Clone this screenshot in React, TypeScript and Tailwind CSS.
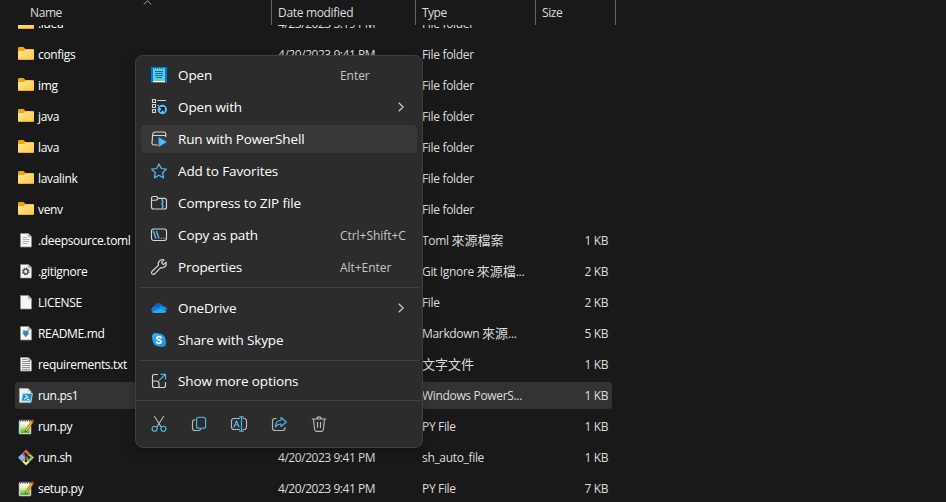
import type { ReactNode } from "react";

const svg = "block size-4 shrink-0 overflow-visible";

function FolderIcon() {
  return (
    <svg viewBox="0 0 16 16" className={svg}>
      <defs>
        <linearGradient id="fold" x1="0" y1="0" x2="1" y2="1">
          <stop offset="0" stopColor="#ffe69a" />
          <stop offset="1" stopColor="#fdc93f" />
        </linearGradient>
      </defs>
      <path d="M0 1.3Q0 0 1.3 0H5.5L7.5 2H14.8Q16 2 16 3.2V8H0Z" fill="#f3a60c" />
      <path d="M0 5Q0 4 1 4H6L7.5 2.6H15Q16 2.6 16 3.6V11.8Q16 13 14.8 13H1.2Q0 13 0 11.8Z" fill="url(#fold)" />
      <path d="M0 11.6Q0 13 1.2 13H14.8Q16 13 16 11.6Q15.6 12.2 14.8 12.2H1.2Q.4 12.2 0 11.6Z" fill="#e3a21a" />
    </svg>
  );
}

function Page({ children }: { children?: ReactNode }) {
  return (
    <svg viewBox="0 0 16 16" className={svg}>
      <path d="M2.5 .5H10.5L13.5 3.5V14H2.5Z" fill="#f6f6f6" stroke="#8f8f8b" strokeWidth=".8" />
      <path d="M10.3 .5V3.7H13.5Z" fill="#b9b9b9" stroke="#8f8f8b" strokeWidth=".5" />
      {children}
    </svg>
  );
}

function TomlIcon() {
  return (
    <Page>
      <path d="M4.5 4.5H9M4.5 6.5H11.5M4.5 8.5H11.5M4.5 10.5H9.5" stroke="#b4b4b4" strokeWidth="1" />
    </Page>
  );
}
function GitignoreIcon() {
  return (
    <Page>
      <circle cx="7.7" cy="7.5" r="3.2" fill="none" stroke="#4d5c62" strokeWidth="1.4" strokeDasharray="1.5 1.01" />
      <circle cx="7.7" cy="7.5" r="2.2" fill="none" stroke="#4d5c62" strokeWidth="1.4" />
    </Page>
  );
}
function MarkdownIcon() {
  return (
    <Page>
      <path d="M5.2 4 7.8 4.9 10.4 4V7H11.3L7.8 11.2 4.3 7H5.2Z" fill="#3f87ae" />
    </Page>
  );
}
function TextIcon() {
  return (
    <Page>
      <path d="M4 2.5H9M4 4.5H12M4 6.5H12M4 8.5H12M4 10.5H12M4 12.3H12" stroke="#858585" strokeWidth=".9" />
    </Page>
  );
}
function Ps1Icon() {
  return (
    <svg viewBox="0 0 16 16" className={svg}>
      <path d="M1.5 .5H10L13 3.5V14.6H1.5Z" fill="#eef1f3" stroke="#a5adb3" strokeWidth=".8" />
      <path d="M10 .5V3.5H13Z" fill="#bfc7cc" />
      <path d="M4.8 5.4H14.4L13.2 13H3.4Z" fill="#2a8fc4" stroke="#a9dcf3" strokeWidth=".9" />
      <path d="M7 6.8 9.6 9 6 11.3M9 11.4H11.4" stroke="#d6effa" strokeWidth="1.1" fill="none" />
    </svg>
  );
}
function PyIcon() {
  return (
    <svg viewBox="0 0 16 16" className={svg}>
      <defs>
        <linearGradient id="npp" x1="0" y1="0" x2="0" y2="1">
          <stop offset=".2" stopColor="#e2f6b8" />
          <stop offset="1" stopColor="#45b41b" />
        </linearGradient>
      </defs>
      <rect x="1" y="1.3" width="12" height="13.7" rx=".8" fill="#f4f4f1" stroke="#8d8d8d" strokeWidth=".7" />
      <rect x="2.2" y="5" width="9.6" height="9" fill="url(#npp)" />
      <path d="M2.5 .2V2.8M4.8 .2V2.8M7.1 .2V2.8M9.4 .2V2.8M11.6 .2V2.8" stroke="#444" strokeWidth=".9" />
      <path d="M13.7 1.6 15.4 2.8 9.2 12 7.2 13 7.3 10.9Z" fill="#f7b62c" stroke="#7d5014" strokeWidth=".6" />
      <path d="M13.2 1.7 14.2 .5Q15.6 .5 16 1.7L15.2 3Z" fill="#d9372c" />
      <path d="M7.2 13 7.3 11.7 8.3 12.4Z" fill="#222" />
    </svg>
  );
}
function ShIcon() {
  return (
    <svg viewBox="0 0 16 16" className={svg}>
      <path d="M8 -.4 11.9 3.5 8 7.4 4.1 3.5Z" fill="#f0655a" />
      <path d="M3.9 3.7 7.8 7.6 3.9 11.5 0 7.6Z" fill="#8ab2f4" />
      <path d="M12.1 3.7 16 7.6 12.1 11.5 8.2 7.6Z" fill="#8bd067" />
      <path d="M8 7.8 11.9 11.7 8 15.6 4.1 11.7Z" fill="#ffe07a" />
      <path d="M6 2.4 11 7.6M8 4.6V10.6" stroke="#25211f" strokeWidth="1.1" />
      <circle cx="8" cy="4.6" r="1.4" fill="#25211f" />
      <circle cx="11" cy="7.6" r="1.4" fill="#25211f" />
      <circle cx="8" cy="10.8" r="1.4" fill="#25211f" />
    </svg>
  );
}

const D = "4/20/2023 9:41 PM";
type Row = { icon: ReactNode; name: string; date: string; type: string; cjk?: string; dots?: boolean; size?: string; selected?: boolean };
const rows: Row[] = [
  { icon: <FolderIcon />, name: ".idea", date: "4/23/2023 3:19 PM", type: "File folder" },
  { icon: <FolderIcon />, name: "configs", date: D, type: "File folder" },
  { icon: <FolderIcon />, name: "img", date: D, type: "File folder" },
  { icon: <FolderIcon />, name: "java", date: D, type: "File folder" },
  { icon: <FolderIcon />, name: "lava", date: D, type: "File folder" },
  { icon: <FolderIcon />, name: "lavalink", date: D, type: "File folder" },
  { icon: <FolderIcon />, name: "venv", date: D, type: "File folder" },
  { icon: <TomlIcon />, name: ".deepsource.toml", date: D, type: "Toml ", cjk: "來源檔案", size: "1 KB" },
  { icon: <GitignoreIcon />, name: ".gitignore", date: D, type: "Git Ignore ", cjk: "來源檔", dots: true, size: "2 KB" },
  { icon: <Page />, name: "LICENSE", date: D, type: "File", size: "2 KB" },
  { icon: <MarkdownIcon />, name: "README.md", date: D, type: "Markdown ", cjk: "來源", dots: true, size: "5 KB" },
  { icon: <TextIcon />, name: "requirements.txt", date: D, type: "", cjk: "文字文件", size: "1 KB" },
  { icon: <Ps1Icon />, name: "run.ps1", date: D, type: "Windows PowerS...", size: "1 KB", selected: true },
  { icon: <PyIcon />, name: "run.py", date: D, type: "PY File", size: "1 KB" },
  { icon: <ShIcon />, name: "run.sh", date: D, type: "sh_auto_file", size: "1 KB" },
  { icon: <PyIcon />, name: "setup.py", date: D, type: "PY File", size: "7 KB" },
];

const W = "#d6d6d6";
const B = "#4cb8f0";

function Line({ children }: { children: ReactNode }) {
  return (
    <svg viewBox="0 0 16 16" className={svg} fill="none" stroke={W} strokeWidth="1.15" strokeLinecap="round" strokeLinejoin="round">
      {children}
    </svg>
  );
}

const icons = {
  open: (
    <svg viewBox="0 0 16 16" className={svg}>
      <rect width="16" height="16" fill="#0078d4" />
      <rect x="2" y="1" width="12" height="13.5" fill="#5ccbe8" />
      <path d="M2 14H14V15H2Z" fill="#fff" />
      <path d="M2 15H14V16H2Z" fill="#b3591c" />
      <path d="M3.5 .5V2M5.5 .5V2M7.5 .5V2M9.5 .5V2M11.5 .5V2" stroke="#0b6f96" strokeWidth=".8" />
      <path d="M4 4.5H12M4 6.5H12M4 8.5H12M5 10.5H11" stroke="#146d92" strokeWidth="1" />
    </svg>
  ),
  openWith: (
    <Line>
      <rect x="1.5" y=".5" width="3" height="3" />
      <rect x="1.5" y="5.5" width="3" height="3" />
      <rect x="1.5" y="10.5" width="3" height="3" />
      <path d="M6.8 1.5H14.5M6.8 6.5H7.3" />
      <circle cx="11.3" cy="10.5" r="4.7" fill="#4cc2ff" stroke="none" />
      <path d="M9.6 12.2 12.7 9.1M9.8 8.7H13V12" stroke="#111" strokeWidth="1.4" />
    </Line>
  ),
  run: (
    <Line>
      <path d="M6.5 14H3.2Q.8 14 1 11.7L1.7 3.5Q2 1 4.3 1H12.2Q15 1 14.8 3.7L14.7 5.8" />
      <path d="M2 4.5H14.5" />
      <path d="M8 6.6 15.5 11 8 15.5Z" fill="#4cb8ff" stroke="#4cb8ff" strokeWidth=".5" />
    </Line>
  ),
  star: (
    <Line>
      <path d="M8 .8 10.2 5.5 15.4 6.1 11.6 9.7 12.6 14.9 8 12.3 3.4 14.9 4.4 9.7 .6 6.1 5.8 5.5Z" stroke={B} strokeWidth="1.25" />
    </Line>
  ),
  zip: (
    <Line>
      <path d="M.5 3.5Q.5 1.5 2.5 1.5H5.4L7.3 3.4H13.5Q15.5 3.4 15.5 5.4V12Q15.5 14 13.5 14H2.5Q.5 14 .5 12ZM.5 5.2H5.2L7.3 3.4" />
      <path d="M11.5 3.5V14M10.3 5H11.5M11.5 7H12.7M10.3 9H11.5M11.5 11H12.7" stroke={B} strokeWidth="1.4" strokeLinecap="butt" />
    </Line>
  ),
  path: (
    <Line>
      <rect x=".5" y="2" width="15" height="11.5" rx="2.2" />
      <path d="M2.7 4.5 4.8 11M5.7 4.5 7.8 11" stroke={B} strokeWidth="1.5" />
      <path d="M10.3 11.2H10.4M13 11.2H13.1" stroke={B} strokeWidth="1.5" />
    </Line>
  ),
  wrench: (
    <Line>
      <path d="M12.9 .9Q10.5 .1 8.4 2 6.6 3.9 7.4 6.4L1.1 12.2Q-.1 13.6 1 14.9 2.3 16.1 3.7 14.8L9.7 8.6Q12.2 9.3 14.1 7.5 15.9 5.5 15.1 3.1L12.4 5.6 10.5 3.6Z" strokeWidth="1.2" />
    </Line>
  ),
  oneDrive: (
    <svg viewBox="0 0 16 16" className={svg}>
      <path d="M2.7 6.9Q3.7 3 7.4 2.9 10.5 2.9 12 6L9 10 2 9Z" fill="#0f62ba" />
      <path d="M7 7.8Q9.4 4.8 12.4 6.2 15.8 6.6 16 9.8L12 11Z" fill="#1a8be6" />
      <path d="M.9 11.5Q-.6 8.5 1.9 7.1 4.4 5.6 7.2 7.8L11 10 3.3 13Q1.6 13 .9 11.5Z" fill="#1279d8" />
      <path d="M1 11.7 9.2 8.6 15.5 11.3Q14.8 13 12.6 13H3.3Q1.8 13 1 11.7Z" fill="#2aa7f0" />
    </svg>
  ),
  skype: (
    <svg viewBox="0 0 16 16" className={svg}>
      <circle cx="8" cy="8" r="6.5" fill="#27a3e8" />
      <circle cx="5" cy="5" r="4" fill="#2aaaf0" />
      <circle cx="11" cy="11" r="4" fill="#1e96df" />
      <path d="M10.1 5.7Q9.5 4.6 8 4.6 5.9 4.6 5.9 6.2 5.9 7.4 8 7.9 10.2 8.4 10.2 9.8 10.2 11.4 8 11.4 6.4 11.4 5.7 10.2" fill="none" stroke="#fff" strokeWidth="1.6" strokeLinecap="round" />
    </svg>
  ),
  more: (
    <Line>
      <path d="M6.5 1.5H3.5Q1.5 1.5 1.5 3.5V12.5Q1.5 14.5 3.5 14.5H12.5Q14.5 14.5 14.5 12.5V9.5M1.5 8H5.5Q8 8 8 10.5V14.5" />
      <path d="M8.5 7.2 14.3 1.3M10 1.3H14.5V5.8" stroke={B} />
    </Line>
  ),
  cut: (
    <Line>
      <path d="M3.5 .5 10 10.8M12.5 .5 6 10.8" stroke="#b8b8b8" />
      <circle cx="3.6" cy="12.7" r="2.5" stroke={B} />
      <circle cx="12.4" cy="12.7" r="2.5" stroke={B} />
    </Line>
  ),
  copy: (
    <Line>
      <path d="M4 3.8Q1.5 4 1.5 6.2V12Q1.5 14.5 4 14.5H7.5Q9.4 14.5 9.8 12.8" stroke="#b8b8b8" />
      <rect x="5.6" y="1.2" width="9" height="11" rx="2" stroke={B} />
    </Line>
  ),
  rename: (
    <Line>
      <path d="M8.5 2.5H3Q.5 2.5 .5 5V11Q.5 13.5 3 13.5H8.5M12.5 2.5H13Q15.5 2.5 15.5 5V11Q15.5 13.5 13 13.5H12.5" stroke="#b8b8b8" />
      <path d="M3 11 5.5 4.8 8 11M3.8 9H7.2M10.5 .8V15.2M8.7 .8H12.3M8.7 15.2H12.3" stroke={B} strokeWidth="1.2" />
    </Line>
  ),
  share: (
    <Line>
      <path d="M5 2.5H4Q1.5 2.5 1.5 5V12Q1.5 14.5 4 14.5H11.5Q14 14.5 14 12V11.5" stroke="#b8b8b8" />
      <path d="M10 1.5 15.3 6 10 10.5V8Q6.5 7.8 4.4 10.8 4.6 4.7 10 4.2Z" stroke={B} />
    </Line>
  ),
  trash: (
    <Line>
      <path d="M1.2 3H14.8M5.8 3Q5.8 .8 8 .8 10.2 .8 10.2 3M2.5 3 3.6 13.5Q3.8 15.4 5.6 15.4H10.4Q12.2 15.4 12.4 13.5L13.5 3M6.5 6.3V11.5M9.5 6.3V11.5" stroke="#b8b8b8" />
    </Line>
  ),
};

function MenuItem({ icon, label, shortcut, arrow, active }: { icon: ReactNode; label: string; shortcut?: string; arrow?: boolean; active?: boolean }) {
  return (
    <div className="h-8 px-[5px] py-0.5">
      <div className={`flex h-7 items-center rounded pl-2.5 ${active ? "bg-[#383838]" : ""}`}>
        {icon}
        <span className="ml-[11px] w-[162px] text-[13.5px] tracking-[-0.12px] text-white">{label}</span>
        {shortcut && <span className="pt-0.5 text-[12px] tracking-[-0.05px] text-[#c5c5c5]">{shortcut}</span>}
        {arrow && (
          <svg viewBox="0 0 6 10" className="ml-[58px] h-2.5 w-1.5" fill="none" stroke="#cfcfcf" strokeWidth="1.2">
            <path d="M.7 .7 5.2 5 .7 9.3" />
          </svg>
        )}
      </div>
    </div>
  );
}

export default function App() {
  return (
    <div className="relative flex h-[502px] w-[946px] flex-col overflow-hidden bg-[#191919] font-['Open_Sans','Noto_Sans_CJK_TC',sans-serif] text-[12px] leading-4 tracking-[-0.25px] whitespace-nowrap text-[#dedede]">
      <header className="flex h-[25px] shrink-0">
        <div className="flex w-[272px] items-center border-r border-[#636363] pl-[30px]">
          <span className="w-[113px] tracking-[-0.4px]">Name</span>
          <svg viewBox="0 0 9 5" className="mt-[-21px] h-[5px] w-[9px]" fill="none" stroke="#a8a8a8">
            <path d="M.7 4.5 4.5 .8 8.3 4.5" />
          </svg>
        </div>
        <div className="flex w-[144px] items-center border-r border-[#636363] pl-1.5 tracking-[-0.32px]">Date modified</div>
        <div className="flex w-[120px] items-center border-r border-[#636363] pl-1.5 tracking-[-0.5px]">Type</div>
        <div className="flex w-20 items-center border-r border-[#636363] pl-1.5 tracking-[-0.4px]">Size</div>
      </header>
      <main className="min-h-0 flex-1 overflow-hidden">
        <div className="mt-[-15px] flex flex-col gap-1 pl-[15px]">
          {rows.map((r) => (
            <div key={r.name} className={`flex h-[27px] w-[597px] shrink-0 items-center rounded-sm pl-[3px] ${r.selected ? "bg-[#333333]" : ""}`}>
              {r.icon}
              <span className="ml-1 w-60 tracking-[-0.33px] text-white">{r.name}</span>
              <span className="w-36 tracking-[-0.45px]">{r.date}</span>
              <span className="w-[120px] tracking-[-0.33px]">
                {r.type}
                {r.cjk && <span className="text-[13px] tracking-normal">{r.cjk}</span>}
                {r.dots && "..."}
              </span>
              <span className="w-[66px] text-right tracking-[-0.42px]">{r.size}</span>
            </div>
          ))}
        </div>
      </main>

      <div className="absolute top-[55px] left-[135px] flex h-[393px] w-[288px] flex-col rounded-lg border border-[#404040] bg-[#2c2c2c] pt-[3px] shadow-[0_4px_10px_rgba(0,0,0,0.25)]">
        <MenuItem icon={icons.open} label="Open" shortcut="Enter" />
        <MenuItem icon={icons.openWith} label="Open with" arrow />
        <MenuItem icon={icons.run} label="Run with PowerShell" active />
        <MenuItem icon={icons.star} label="Add to Favorites" />
        <MenuItem icon={icons.zip} label="Compress to ZIP file" />
        <MenuItem icon={icons.path} label="Copy as path" shortcut="Ctrl+Shift+C" />
        <MenuItem icon={icons.wrench} label="Properties" shortcut="Alt+Enter" />
        <div className="mx-[3px] mt-1 mb-1 h-px bg-[#404040]" />
        <MenuItem icon={icons.oneDrive} label="OneDrive" arrow />
        <MenuItem icon={icons.skype} label="Share with Skype" />
        <div className="mx-[3px] mt-1 mb-1 h-px bg-[#404040]" />
        <MenuItem icon={icons.more} label="Show more options" />
        <div className="mt-[3px] h-px bg-[#404040]" />
        <div className="flex flex-1 items-center gap-6 pl-[15px]">
          {icons.cut}
          {icons.copy}
          {icons.rename}
          {icons.share}
          {icons.trash}
        </div>
      </div>
    </div>
  );
}
